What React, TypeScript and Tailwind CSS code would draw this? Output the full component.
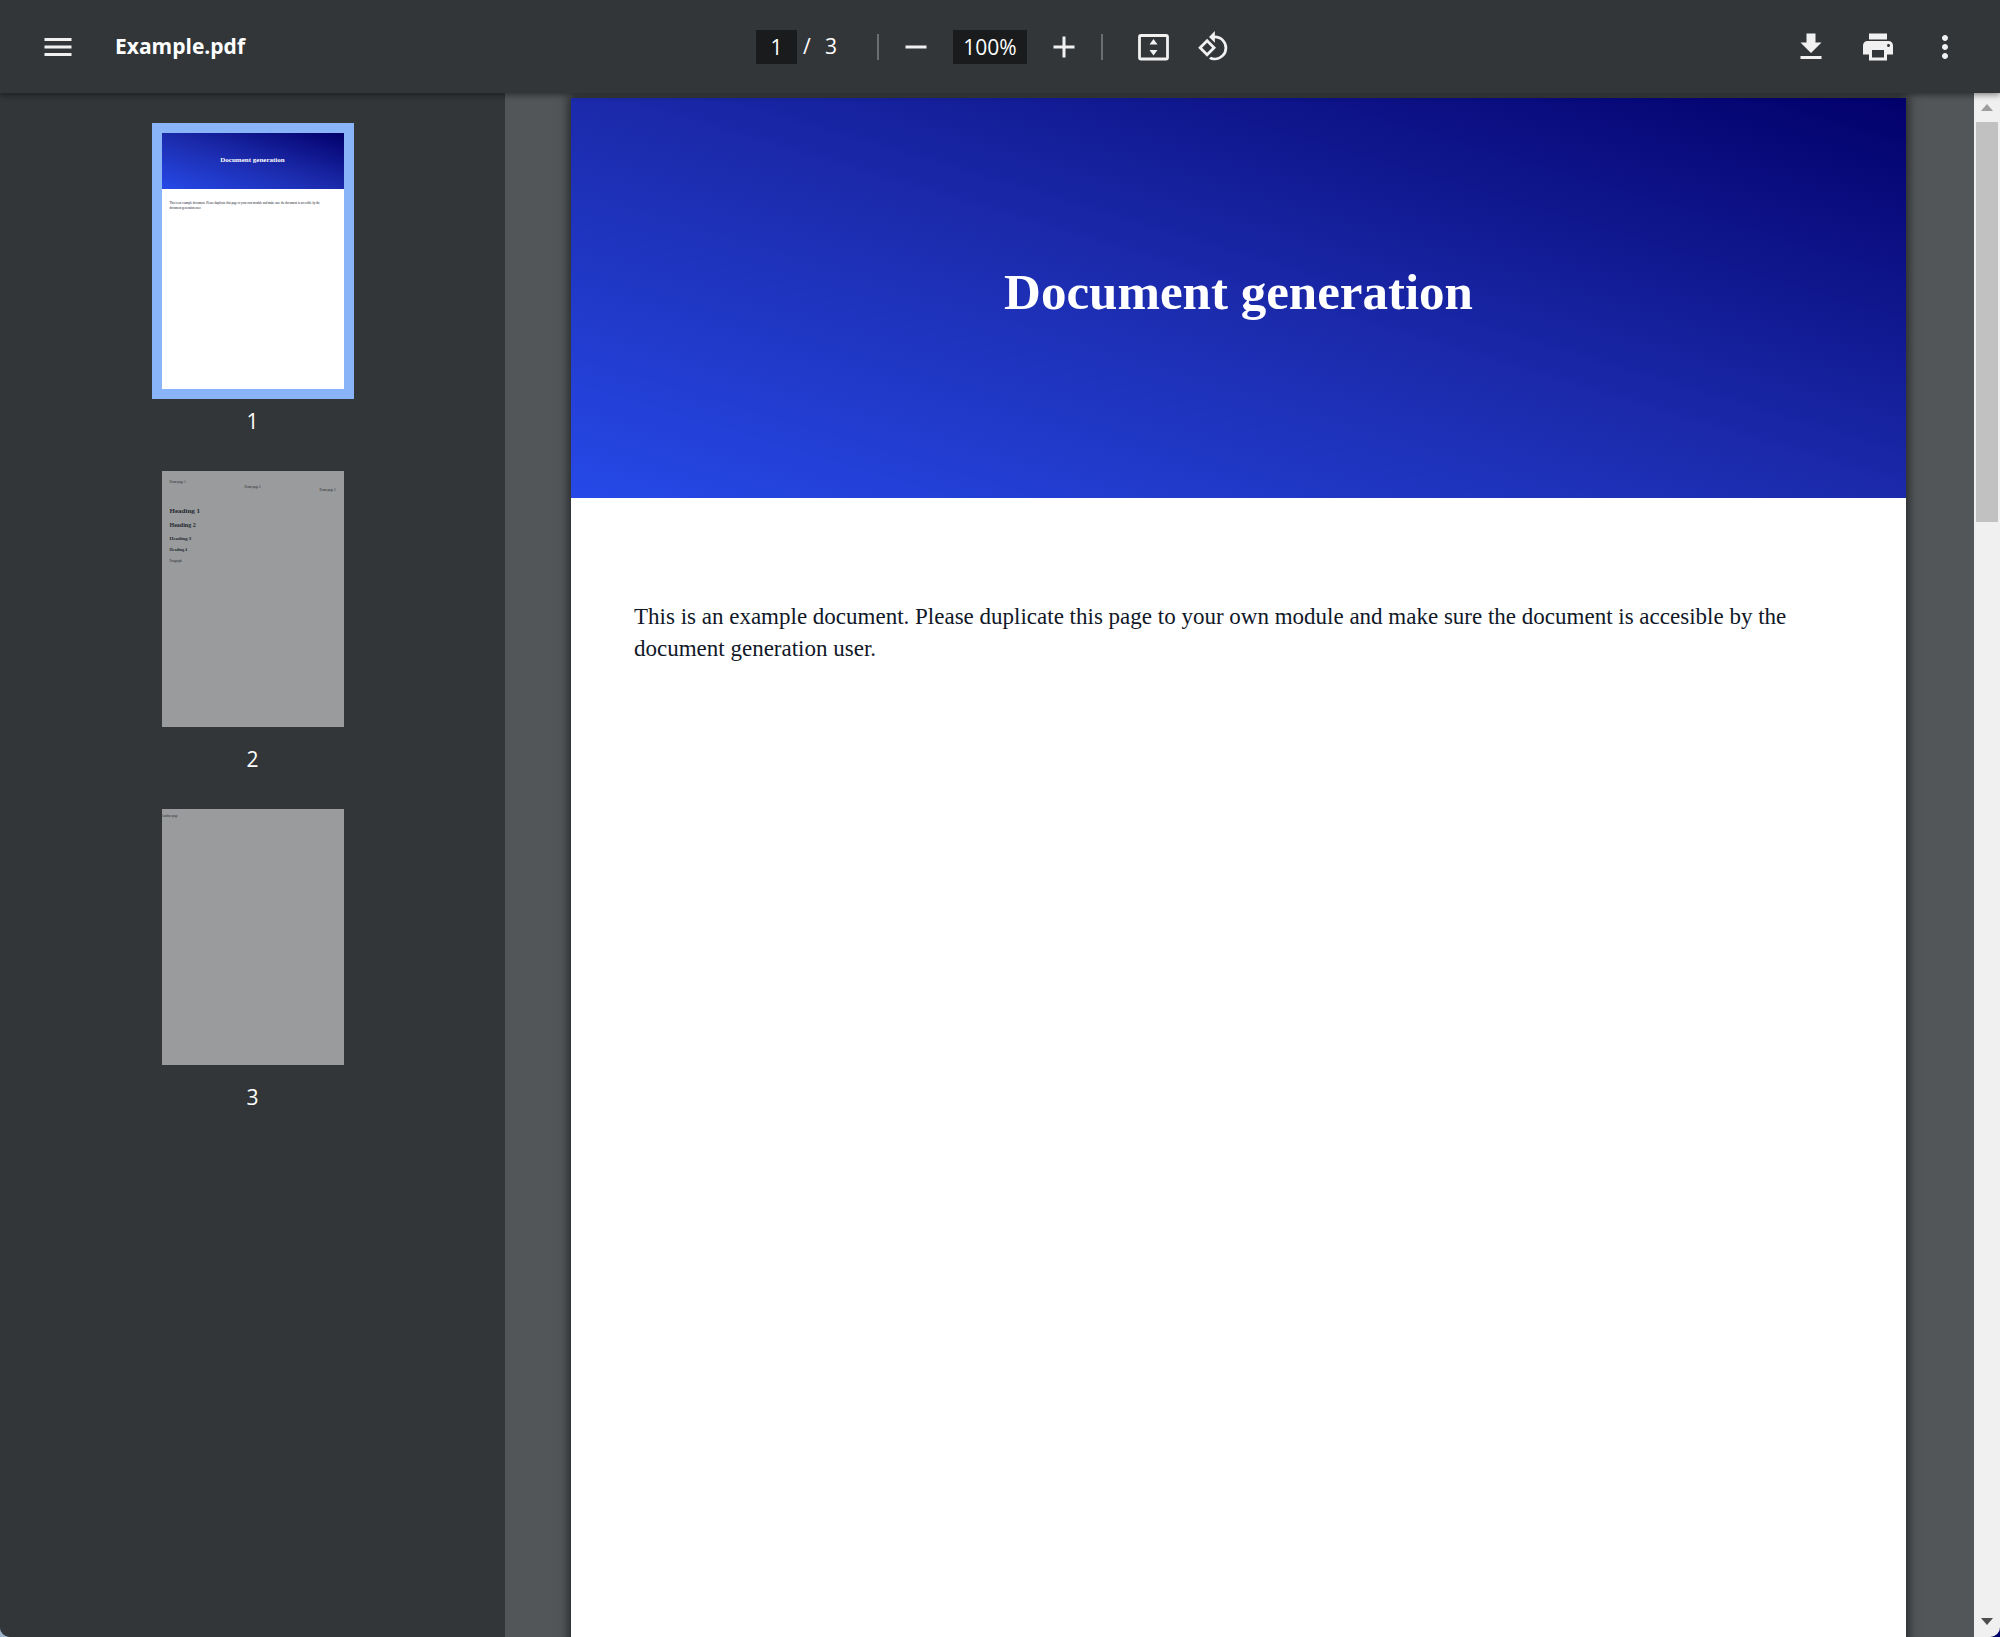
import type { ReactNode } from "react"
import { MdAdd, MdFileDownload, MdMenu, MdMoreVert, MdPrint, MdRemove, MdRotate90DegreesCcw } from "react-icons/md"

const headings = [
  { text: "Heading 1", className: "text-[7px] h-[14px]" },
  { text: "Heading 2", className: "text-[6px] h-[13px]" },
  { text: "Heading 3", className: "text-[5px] h-[11px]" },
  { text: "Heading 4", className: "text-[4px] h-[12px]" },
]

function IconButton({ label, children }: { label: string; children: ReactNode }) {
  return (
    <button
      type="button"
      aria-label={label}
      className="flex size-9 shrink-0 items-center justify-center rounded-full text-[#f1f1f1] hover:bg-white/10"
    >
      {children}
    </button>
  )
}

function Divider() {
  return <div className="h-[26px] w-[2px] bg-[#6b6e70]" />
}

function FitIcon() {
  return (
    <svg width="36" height="36" viewBox="0 0 36 36" fill="none" aria-hidden="true">
      <rect x="4.5" y="6.5" width="28" height="23.5" rx="1.5" stroke="currentColor" strokeWidth="2.8" />
      <path d="M18.5 10l4 5.5h-8zM18.5 26.5l4-5.5h-8z" fill="currentColor" />
    </svg>
  )
}

function Toolbar() {
  return (
    <header className="relative z-10 flex h-[93px] shrink-0 items-center bg-[#323639] text-white shadow-[0_2px_6px_rgba(0,0,0,0.45)]">
      {/* File name */}
      <div className="flex flex-1 items-center gap-[39px] pl-10">
        <IconButton label="Menu">
          <MdMenu size={36} />
        </IconButton>
        <h1 className="text-[21px] font-bold">Example.pdf</h1>
      </div>

      {/* Page and zoom controls */}
      <div className="flex items-center pr-4 text-[21px] font-medium">
        <input
          aria-label="Page number"
          defaultValue="1"
          className="h-[34px] w-[41px] bg-[#191b1c] text-center outline-none"
        />
        <span className="ml-[6px] w-[22px]">/</span>
        <span className="w-[12px]">3</span>
        <div className="ml-10 flex items-center gap-[19px]">
          <Divider />
          <IconButton label="Zoom out">
            <MdRemove size={36} />
          </IconButton>
          <input
            aria-label="Zoom level"
            defaultValue="100%"
            className="h-[34px] w-[74px] bg-[#191b1c] text-center outline-none"
          />
          <IconButton label="Zoom in">
            <MdAdd size={36} />
          </IconButton>
          <Divider />
        </div>
        <div className="ml-8 flex items-center gap-6">
          <IconButton label="Fit to page">
            <FitIcon />
          </IconButton>
          <IconButton label="Rotate counterclockwise">
            <MdRotate90DegreesCcw size={33} />
          </IconButton>
        </div>
      </div>

      {/* File actions */}
      <div className="flex flex-1 items-center justify-end gap-[31px] pr-[37px]">
        <IconButton label="Download">
          <MdFileDownload size={36} />
        </IconButton>
        <IconButton label="Print">
          <MdPrint size={36} />
        </IconButton>
        <IconButton label="More actions">
          <MdMoreVert size={36} />
        </IconButton>
      </div>
    </header>
  )
}

function Thumbnail({ page, active, children }: { page: number; active?: boolean; children: ReactNode }) {
  return (
    <button type="button" aria-label={`Page ${page}`} className="flex h-[338px] flex-col items-center">
      <div
        className={
          active
            ? "h-[256px] w-[182px] bg-white text-left text-[#101828] outline-[10px] outline-[#8ab4f8]"
            : "h-[256px] w-[182px] bg-[#9a9b9c] text-left text-[#23272f]"
        }
      >
        <div className="font-['Liberation_Serif',serif] text-[3px] leading-[5px]">{children}</div>
      </div>
      <span className="mt-[17px] text-[21px] leading-[30px] font-medium text-white">{page}</span>
    </button>
  )
}

function Sidebar() {
  return (
    <nav aria-label="Pages" className="flex w-[505px] shrink-0 flex-col items-center bg-[#323639] pt-10">
      <Thumbnail page={1} active>
        <div className="flex h-[56px] items-center justify-center bg-linear-to-tr/srgb from-[#2649e8] via-[#1b2aab] to-[#02006b] pb-[2px] text-[7px] font-bold text-white">
          Document generation
        </div>
        <p className="px-2 pt-3">
          This is an example document. Please duplicate this page to your own module and make sure the document is accesible by the
          <br />
          document generation user.
        </p>
      </Thumbnail>
      <Thumbnail page={2}>
        <div className="px-2 pt-[9px]">
          <p className="h-[5px]">Demo page 1</p>
          <p className="h-[3px] text-center">Demo page 2</p>
          <p className="text-right">Demo page 3</p>
          <div className="pt-4">
            {headings.map((heading) => (
              <p key={heading.text} className={`font-bold ${heading.className}`}>
                {heading.text}
              </p>
            ))}
          </div>
          <p>Paragraph</p>
        </div>
      </Thumbnail>
      <Thumbnail page={3}>
        <p className="pt-[5px]">Another page</p>
      </Thumbnail>
    </nav>
  )
}

function Scrollbar() {
  return (
    <div className="flex w-[26px] shrink-0 flex-col items-center justify-between bg-[#f0f0f0] pt-[11px] pb-3">
      <div className="flex w-full flex-col items-center gap-[11px]">
        <svg width="12" height="7" viewBox="0 0 12 7" aria-hidden="true">
          <path d="M0 7l6-7 6 7z" fill="#9d9d9d" />
        </svg>
        <div className="h-[400px] w-[22px] bg-[#c1c1c1]" />
      </div>
      <svg width="12" height="7" viewBox="0 0 12 7" aria-hidden="true">
        <path d="M0 0h12l-6 7z" fill="#4d4d4d" />
      </svg>
    </div>
  )
}

export default function App() {
  return (
    <div className="h-screen bg-linear-to-r from-[#9db4cc] to-[#00006e] font-['Open_Sans','Noto_Sans',sans-serif]">
      <div className="flex h-full flex-col overflow-hidden rounded-b-[10px] bg-[#525659]">
        <Toolbar />
        <div className="flex min-h-0 flex-1">
          <Sidebar />

          {/* Document */}
          <main className="flex-1 overflow-hidden pt-[5px] pr-[68px] pl-[66px]">
            <article className="aspect-[182/256] bg-white font-['Liberation_Serif',serif] text-[#101828] shadow-[0_0_10px_2px_rgba(0,0,0,0.6)]">
              <div className="flex h-[400px] items-center justify-center bg-linear-to-tr/srgb from-[#2649e8] via-[#1b2aab] to-[#02006b] pb-3">
                <h2 className="text-[51px] font-bold text-white">Document generation</h2>
              </div>
              <p className="px-[63px] pt-[103px] text-[23px] leading-8">
                This is an example document. Please duplicate this page to your own module and make sure the document is
                accesible by the document generation user.
              </p>
            </article>
          </main>

          <Scrollbar />
        </div>
      </div>
    </div>
  )
}
